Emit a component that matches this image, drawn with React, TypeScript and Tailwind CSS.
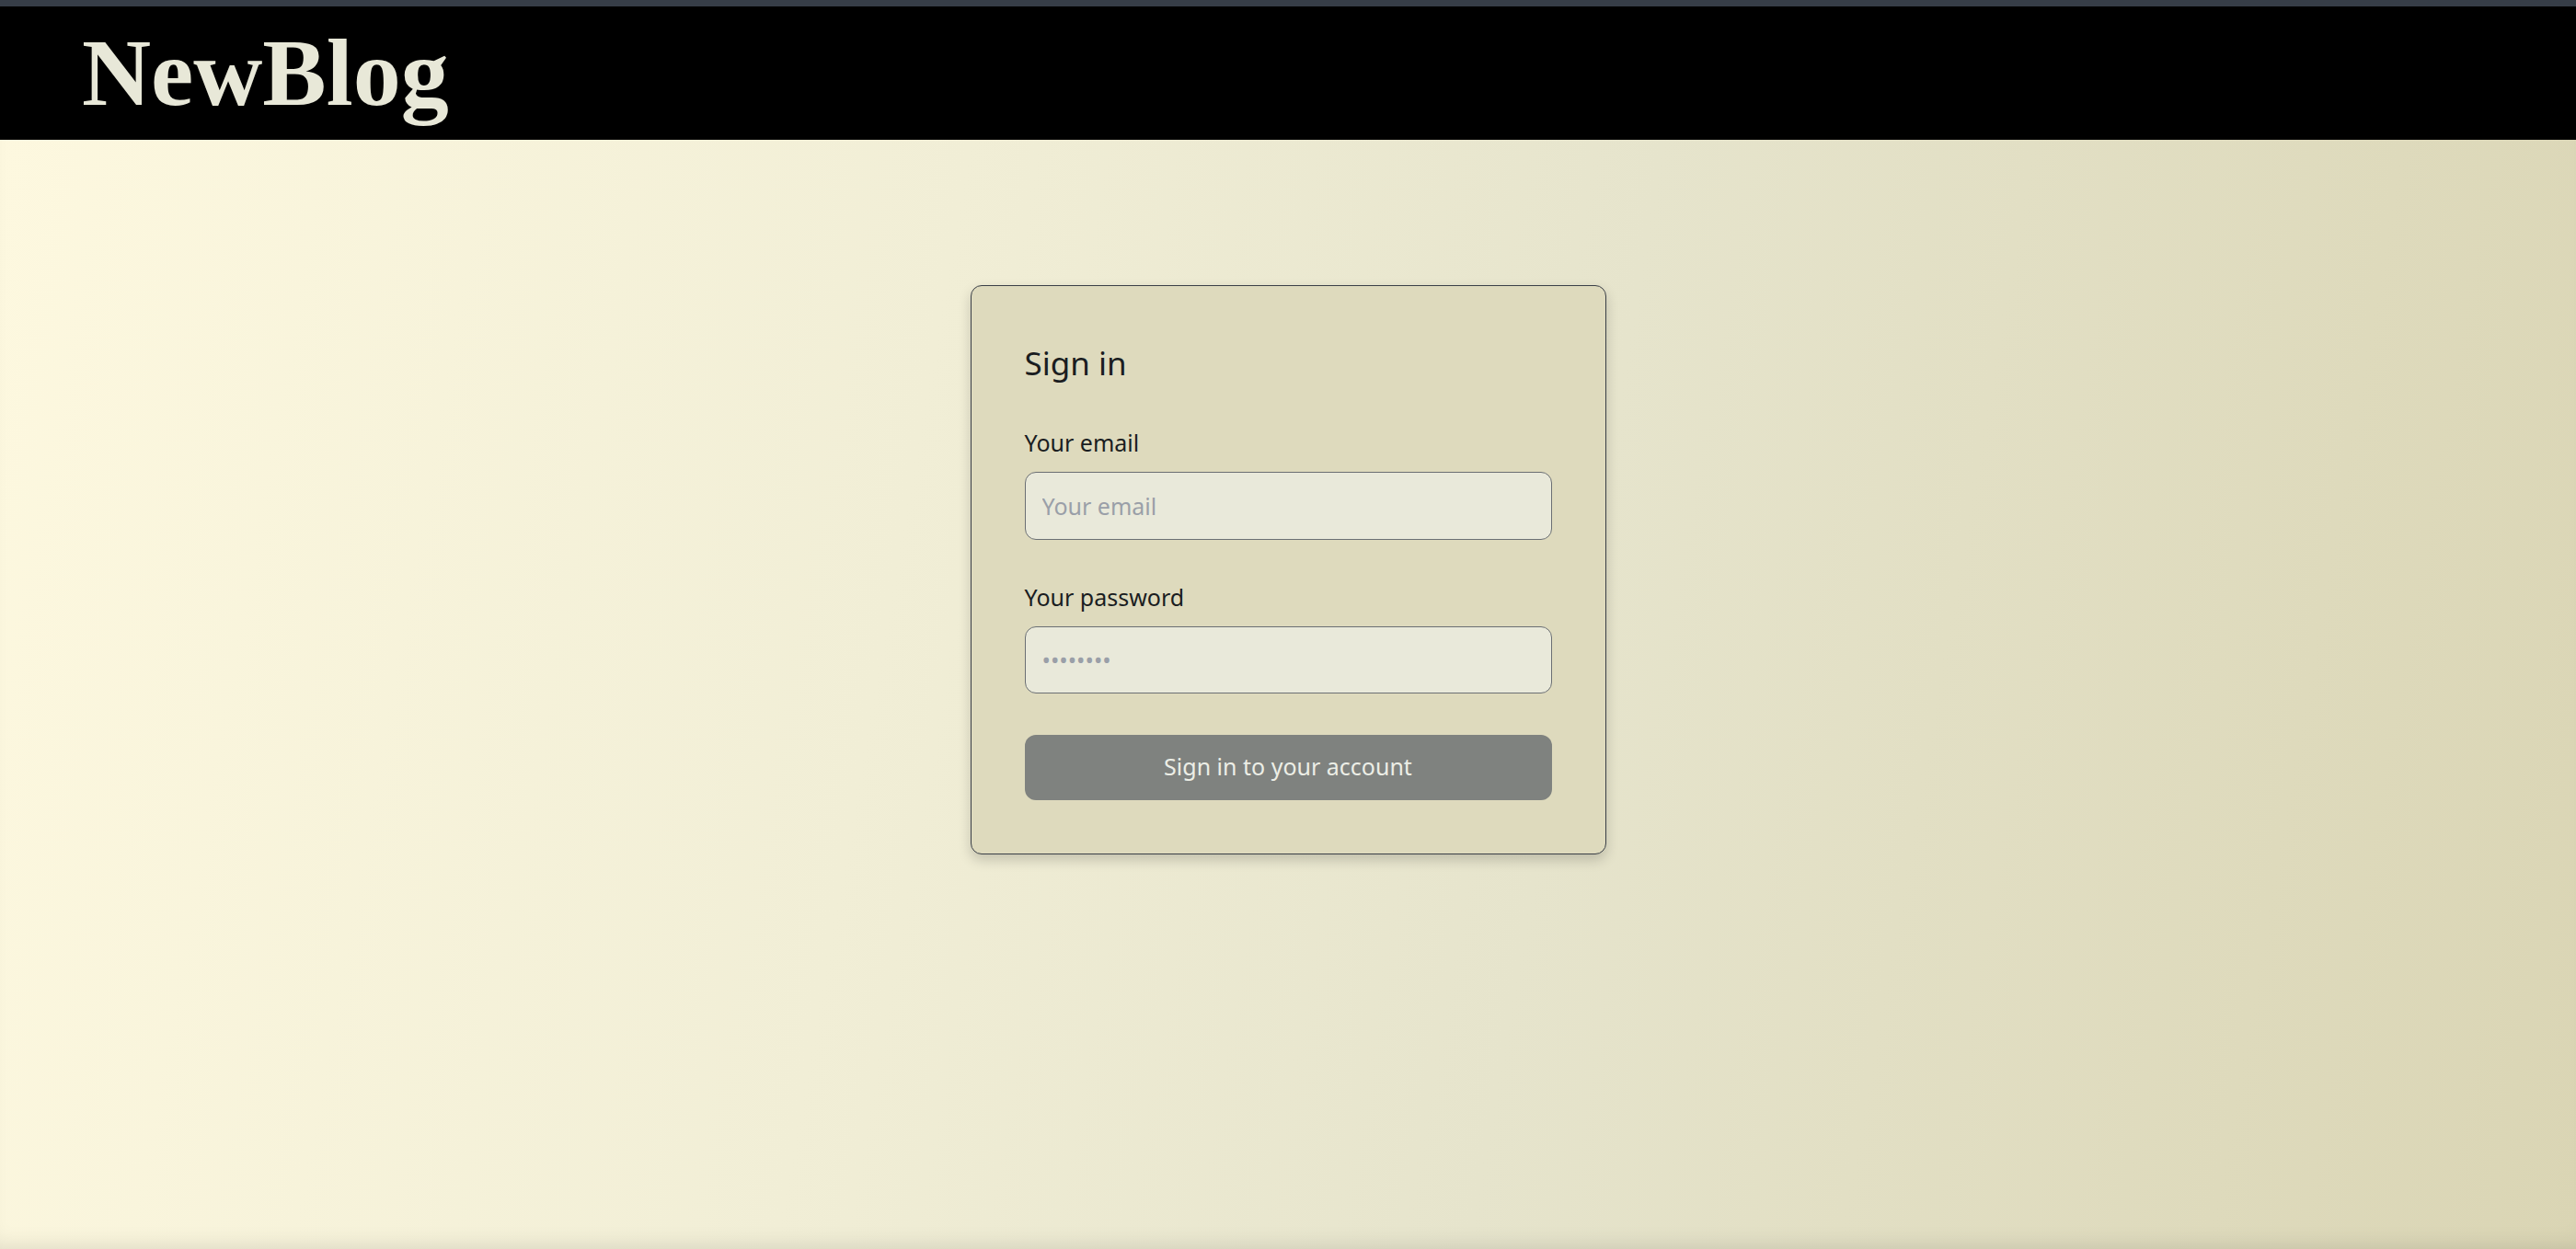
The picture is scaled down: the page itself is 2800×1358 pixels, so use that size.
export default function App() {
  const handleSubmit = (e: React.FormEvent<HTMLFormElement>) => {
    e.preventDefault()
  }

  return (
    <div className="h-screen flex flex-col overflow-hidden font-['Noto_Sans',sans-serif]">
      <header className="bg-black border-t-[7px] border-[#363d47] h-[152px] flex items-center px-[89px]">
        <h1 className="text-[104px] leading-none font-bold text-[#e8e8d8] font-['Liberation_Serif',serif] -mt-[2px]">
          NewBlog
        </h1>
      </header>

      <main className="flex-grow flex justify-center items-start pt-[158px] bg-[linear-gradient(100deg,#fdf8df_0%,#f1eed6_35%,#e6e4cc_60%,#dad5b4_100%)] shadow-[inset_0_-18px_24px_-16px_rgba(0,0,0,0.12)]">
        <form
          onSubmit={handleSubmit}
          className="w-[691px] bg-[#dedabd] border border-[#3a3f47] rounded-xl p-[58px] shadow-[0_6px_14px_rgba(0,0,0,0.18)] flex flex-col"
        >
          <h2 className="text-[35px] text-[#1a1d21] mb-[41px]">Sign in</h2>

          <div className="flex flex-col">
            <label htmlFor="email" className="text-[25px] text-[#1a1d21] mb-[13px]">
              Your email
            </label>
            <input
              type="email"
              id="email"
              placeholder="Your email"
              className="h-[74px] px-[18px] text-[25px] bg-[#e9e9da] border border-[#6b6f73] rounded-xl placeholder:text-[#9a9fa8] outline-none"
            />
          </div>

          <div className="flex flex-col mt-[44px]">
            <label htmlFor="password" className="text-[25px] text-[#1a1d21] mb-[12px]">
              Your password
            </label>
            <input
              type="password"
              id="password"
              placeholder="••••••••"
              className="h-[73px] px-[18px] text-[25px] bg-[#e9e9da] border border-[#6b6f73] rounded-xl placeholder:text-[#9a9fa8] outline-none"
            />
          </div>

          <button
            type="submit"
            className="mt-[45px] h-[71px] rounded-xl bg-[#7f827f] text-[#eceee6] text-[25px]"
          >
            Sign in to your account
          </button>
        </form>
      </main>
    </div>
  )
}
